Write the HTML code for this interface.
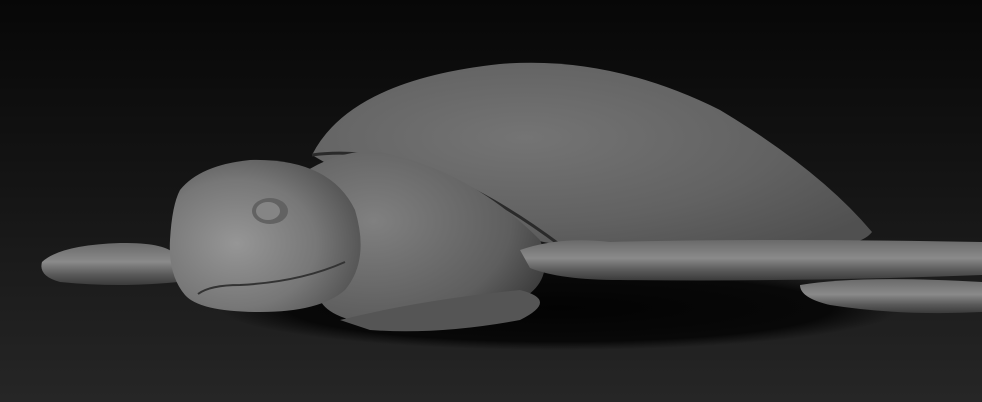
<!DOCTYPE html>
<html><head><meta charset="utf-8"><style>
html,body{margin:0;padding:0;width:982px;height:402px;overflow:hidden;background:#111}
svg{display:block}
</style></head><body>
<svg width="982" height="402" viewBox="0 0 982 402" xmlns="http://www.w3.org/2000/svg">
<defs>
<linearGradient id="bg" x1="0" y1="0" x2="0" y2="1">
<stop offset="0" stop-color="#070707"/><stop offset="0.45" stop-color="#141414"/><stop offset="1" stop-color="#262626"/>
</linearGradient>
<radialGradient id="shell" cx="0.38" cy="0.4" r="0.75">
<stop offset="0" stop-color="#747474"/><stop offset="0.6" stop-color="#626262"/><stop offset="1" stop-color="#505050"/>
</radialGradient>
<radialGradient id="head" cx="0.35" cy="0.55" r="0.7">
<stop offset="0" stop-color="#969696"/><stop offset="0.6" stop-color="#777"/><stop offset="1" stop-color="#505050"/>
</radialGradient>
<radialGradient id="neck" cx="0.3" cy="0.4" r="0.8">
<stop offset="0" stop-color="#808080"/><stop offset="0.7" stop-color="#5e5e5e"/><stop offset="1" stop-color="#383838"/>
</radialGradient>
<linearGradient id="flip" x1="0" y1="0" x2="0" y2="1">
<stop offset="0" stop-color="#6a6a6a"/><stop offset="0.45" stop-color="#8a8a8a"/><stop offset="0.75" stop-color="#5a5a5a"/><stop offset="1" stop-color="#3a3a3a"/>
</linearGradient>
<radialGradient id="shadow" cx="0.5" cy="0.5" r="0.5">
<stop offset="0" stop-color="#030303"/><stop offset="0.8" stop-color="#080808"/><stop offset="1" stop-color="#0a0a0a" stop-opacity="0"/>
</radialGradient>
</defs>
<rect width="982" height="402" fill="url(#bg)"/>
<ellipse cx="560" cy="308" rx="340" ry="42" fill="url(#shadow)"/>
<path d="M800 285 Q860 275 982 282 L982 312 Q900 316 830 305 Q800 298 800 285Z" fill="url(#flip)"/>
<path d="M312 155 Q350 80 500 64 Q610 55 720 110 Q820 170 872 232 Q860 248 800 250 L560 245 Q420 220 312 155Z" fill="url(#shell)"/>
<path d="M312 155 Q420 140 560 245" fill="none" stroke="#2a2a2a" stroke-width="3"/>
<path d="M42 262 Q60 245 120 243 Q170 242 178 258 L178 282 Q120 288 60 282 Q38 276 42 262Z" fill="url(#flip)"/>
<path d="M300 175 Q340 148 380 152 Q470 170 540 240 Q560 290 500 308 Q440 330 380 325 Q330 320 320 300 Z" fill="url(#neck)"/>
<path d="M340 320 Q420 300 520 290 Q560 300 520 320 Q440 335 370 330 Z" fill="#555"/>
<path d="M520 250 Q560 236 610 242 Q760 238 982 242 L982 275 Q800 282 620 280 Q560 280 530 268 Z" fill="url(#flip)"/>
<path d="M180 190 Q200 165 250 160 Q330 158 355 210 Q370 260 345 290 Q320 312 260 312 Q200 312 185 295 Q168 275 170 240 Q172 205 180 190Z" fill="url(#head)"/>
<ellipse cx="270" cy="211" rx="18" ry="13" fill="#626262"/>
<ellipse cx="268" cy="211" rx="12" ry="9" fill="#858585"/>
<path d="M198 294 Q210 285 240 285 Q300 282 345 262" fill="none" stroke="#333" stroke-width="2"/>
</svg>
</body></html>
